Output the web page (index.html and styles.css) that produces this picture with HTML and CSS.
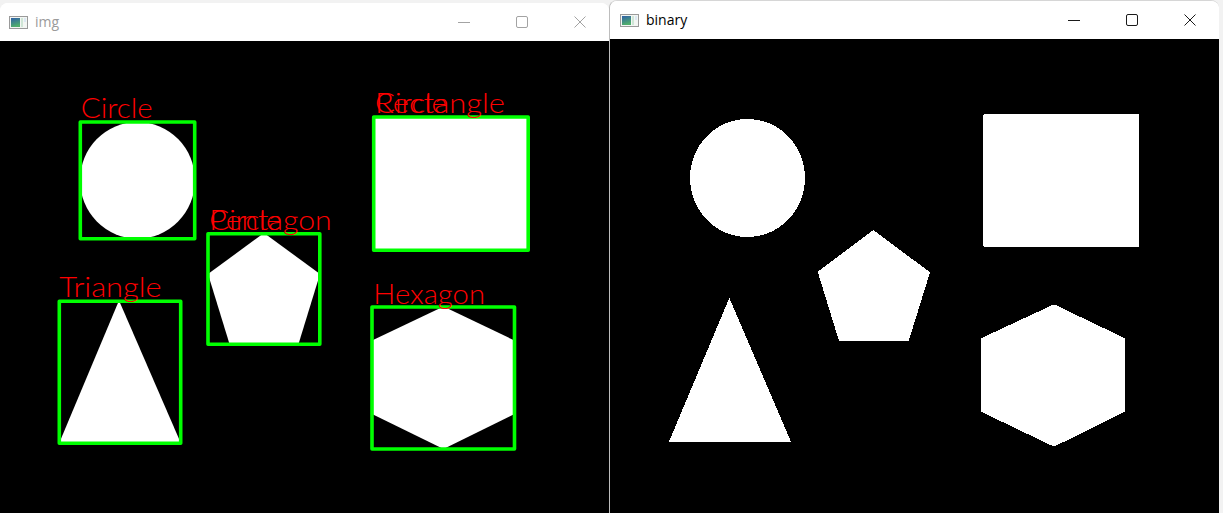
FILE: index.html
```html
<!DOCTYPE html>
<html>
<head>
<meta charset="utf-8">
<title>img / binary</title>
<link rel="stylesheet" href="styles.css">
</head>
<body>
<div class="desktop">
  <section class="window window-left inactive">
    <header class="titlebar">
      <svg class="app-icon" width="19" height="13" viewBox="0 0 19 13">
        <defs>
          <linearGradient id="ig1" x1="0" y1="0" x2="0.3" y2="1">
            <stop offset="0" stop-color="#2f5fa8"/>
            <stop offset="1" stop-color="#4fae6c"/>
          </linearGradient>
        </defs>
        <rect x="0.5" y="0.5" width="18" height="12" fill="#f3f6f3" stroke="#9a9a9a"/>
        <rect x="2" y="2" width="9" height="9" fill="url(#ig1)"/>
        <rect x="12" y="2" width="2" height="9" fill="#cfe6d6"/>
        <rect x="15" y="2" width="2" height="4" fill="#dbe8f2"/>
      </svg>
      <span class="title">img</span>
      <div class="controls">
        <button class="cap"><svg width="14" height="14" viewBox="0 0 14 14"><path d="M1 7.5h12" /></svg></button>
        <button class="cap"><svg width="14" height="14" viewBox="0 0 14 14"><rect x="1.5" y="1.5" width="11" height="11" rx="1.5"/></svg></button>
        <button class="cap"><svg width="14" height="14" viewBox="0 0 14 14"><path d="M1.5 1.5l11 11M12.5 1.5l-11 11"/></svg></button>
      </div>
    </header>
    <div class="canvas">
      <svg class="image" width="608" height="472" viewBox="-1 0 608 472">
        <g class="shapes-soft">
          <ellipse cx="136.5" cy="139.3" rx="57.5" ry="58.3"/>
          <rect x="372.5" y="75.5" width="155" height="133.5"/>
          <polygon points="118,259.5 180,402.5 58,402.5"/>
          <polygon points="263,192 319,233 297.5,303 228.5,303 207,233"/>
          <polygon points="442.5,265.5 513.5,299.5 513.5,373 442.5,408 371,373 371,299.5"/>
        </g>
        <g class="boxes">
          <rect x="79.3" y="81" width="114.4" height="116.8"/>
          <rect x="372.7" y="76" width="154.5" height="133.3"/>
          <rect x="207" y="192.7" width="111.8" height="110.5"/>
          <rect x="58.3" y="260.3" width="121.4" height="142"/>
          <rect x="371" y="266" width="142.5" height="142"/>
        </g>
        <g class="labels">
          <text x="79.7" y="77.3" textLength="72" lengthAdjust="spacingAndGlyphs">Circle</text>
          <text x="374" y="72.3" textLength="130" lengthAdjust="spacingAndGlyphs">Rectangle</text>
          <text x="374" y="72.3" textLength="72" lengthAdjust="spacingAndGlyphs">Circle</text>
          <text x="208.3" y="189" textLength="122.4" lengthAdjust="spacingAndGlyphs">Pentagon</text>
          <text x="208.3" y="189" textLength="72" lengthAdjust="spacingAndGlyphs">Circle</text>
          <text x="58.3" y="256.3" textLength="102.4" lengthAdjust="spacingAndGlyphs">Triangle</text>
          <text x="372.3" y="263" textLength="111.7" lengthAdjust="spacingAndGlyphs">Hexagon</text>
        </g>
      </svg>
    </div>
  </section>

  <section class="window window-right">
    <header class="titlebar">
      <svg class="app-icon" width="19" height="13" viewBox="0 0 19 13">
        <defs>
          <linearGradient id="ig2" x1="0" y1="0" x2="0.3" y2="1">
            <stop offset="0" stop-color="#2f5fa8"/>
            <stop offset="1" stop-color="#4fae6c"/>
          </linearGradient>
        </defs>
        <rect x="0.5" y="0.5" width="18" height="12" fill="#f3f6f3" stroke="#9a9a9a"/>
        <rect x="2" y="2" width="9" height="9" fill="url(#ig2)"/>
        <rect x="12" y="2" width="2" height="9" fill="#cfe6d6"/>
        <rect x="15" y="2" width="2" height="4" fill="#dbe8f2"/>
      </svg>
      <span class="title">binary</span>
      <div class="controls">
        <button class="cap"><svg width="14" height="14" viewBox="0 0 14 14"><path d="M1 7.5h12" /></svg></button>
        <button class="cap"><svg width="14" height="14" viewBox="0 0 14 14"><rect x="1.5" y="1.5" width="11" height="11" rx="1.5"/></svg></button>
        <button class="cap"><svg width="14" height="14" viewBox="0 0 14 14"><path d="M1.5 1.5l11 11M12.5 1.5l-11 11"/></svg></button>
      </div>
    </header>
    <div class="canvas">
      <svg class="image" width="608" height="474" viewBox="-1 0 608 474">
        <g class="shapes-hard">
          <ellipse cx="136.5" cy="139" rx="57.5" ry="59"/>
          <rect x="372.3" y="75" width="155.7" height="133.3" rx="1.5"/>
          <polygon points="118.3,259 180,402.7 58,402.7"/>
          <polygon points="262.3,191 319,233.3 297.7,302 228,302 206.7,232.7"/>
          <polygon points="443,265.3 514,299.3 514,372.7 443,407.7 370,372.7 370,299.3"/>
        </g>
      </svg>
    </div>
  </section>
</div>
</body>
</html>
```

FILE: styles.css
```css
html, body {
  margin: 0;
  padding: 0;
}

body {
  width: 1223px;
  height: 513px;
  overflow: hidden;
  background: #f2f2f2;
  font-family: "Open Sans", "Noto Sans", "Liberation Sans", sans-serif;
}

.desktop {
  display: flex;
  align-items: flex-start;
  height: 513px;
}

.window {
  display: flex;
  flex-direction: column;
  background: #fff;
  border-radius: 8px 8px 0 0;
  overflow: hidden;
}

.window-left {
  width: 609px;
  height: 510px;
  margin-top: 3px;
}

.window-right {
  width: 609px;
  height: 512px;
  border-left: 1px solid #bdbdbd;
  border-top: 1px solid #d6d6d6;
}

.titlebar {
  height: 38px;
  flex: none;
  display: flex;
  align-items: center;
  background: #fff;
}

.window-left .titlebar {
  padding-left: 9px;
}

.window-right .titlebar {
  padding-left: 10px;
}

.app-icon {
  display: block;
  flex: none;
}

.title {
  margin-left: 7px;
  font-size: 14px;
  color: #000;
  line-height: 1;
  margin-top: -1px;
}

.inactive .title {
  color: #9b9b9b;
}

.controls {
  margin-left: auto;
  display: flex;
  height: 38px;
}

.cap {
  width: 58px;
  height: 38px;
  border: 0;
  padding: 0;
  margin: 0;
  background: transparent;
  display: flex;
  align-items: center;
  justify-content: center;
}

.cap svg {
  display: block;
  fill: none;
  stroke: #1a1a1a;
  stroke-width: 1;
}

.inactive .cap svg {
  stroke: #a3a3a3;
}

.canvas {
  flex: 1;
  background: #000;
  overflow: hidden;
}

.image {
  display: block;
}

.shapes-soft {
  fill: #fff;
}

.shapes-hard {
  fill: #fff;
  shape-rendering: crispEdges;
}

.boxes rect {
  fill: none;
  stroke: #00ff00;
  stroke-width: 3.6;
  stroke-linejoin: round;
}

.labels text {
  fill: #ff0000;
  font-family: "Lato", "DejaVu Sans", sans-serif;
  font-weight: 300;
  font-size: 28px;
}
```
